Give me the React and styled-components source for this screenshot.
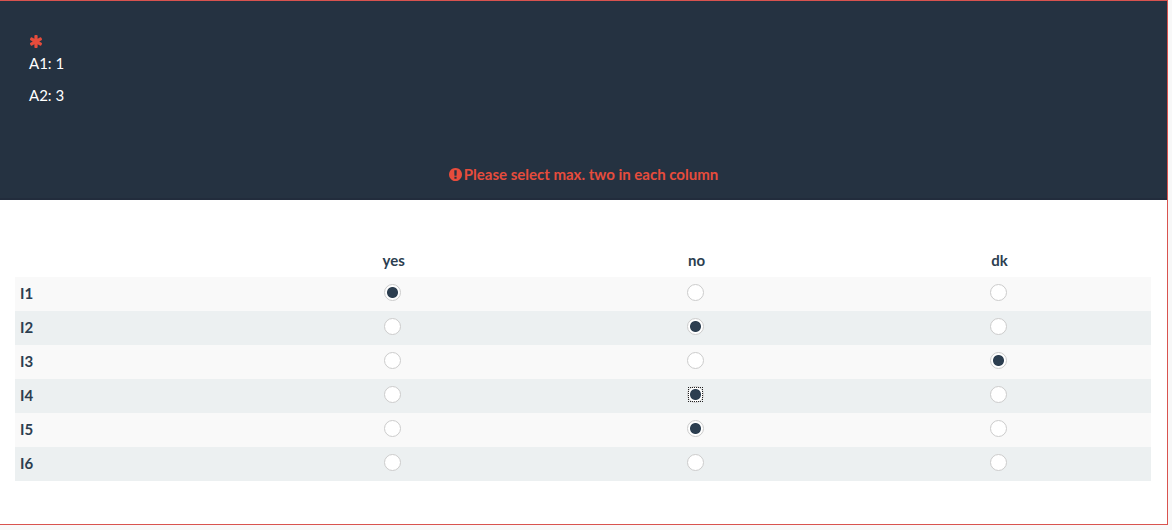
import React, {useState} from 'react';
import styled, {createGlobalStyle} from 'styled-components';

const GlobalStyle = createGlobalStyle`
    *, *::before, *::after {
        box-sizing: border-box;
    }

    body {
        margin: 0;
        background: #f8f8f8;
        color: #2c3e50;
        font-family: Lato, 'Liberation Sans', sans-serif;
        font-size: 15px;
        line-height: 22px;
    }
`;

const Question = styled.section`
    margin-right: 4px;
    padding-bottom: 43px;
    background: #ffffff;
    border: 1px solid #d9534f;
    border-left: 0;
`;

const QuestionHeader = styled.header`
    padding: 29px 29px 13px;
    background: #253241;
    border-bottom: 2px solid #222c3c;
    color: #ffffff;
`;

const Required = styled.div`
    display: flex;
    align-items: center;
    height: 22px;
    color: #e74c3c;
`;

const QuestionText = styled.p`
    margin: 0 0 10px;
`;

const ErrorMessage = styled.div`
    display: flex;
    align-items: center;
    justify-content: center;
    gap: 2px;
    margin-top: 57px;
    color: #e74c3c;
    font-weight: bold;
`;

const AnswerArea = styled.div`
    padding: 44px 16px 0 15px;
`;

const AnswerTable = styled.table`
    width: 100%;
    table-layout: fixed;
    border-collapse: collapse;
`;

const ColumnHeader = styled.th`
    width: ${props => props.$width};
    height: 33px;
    padding: 0 0 2px;
    text-align: center;
`;

const AnswerRow = styled.tr`
    height: 34px;
    background: #f9f9f9;

    &:nth-child(even) {
        background: #ecf0f1;
    }
`;

const RowHeader = styled.th`
    padding: 0 5px 2px;
    text-align: left;
`;

const AnswerCell = styled.td`
    padding: 0 3px 4px 0;
`;

const Radio = styled.input`
    appearance: none;
    display: block;
    width: 17px;
    height: 17px;
    margin: 0 auto;
    border: 1px solid #cccccc;
    border-radius: 50%;
    background: #ffffff;

    &:checked {
        background: radial-gradient(circle, #2c3e50 5px, #ffffff 6px);
    }

    &:focus {
        outline: none;
    }

    &:focus::before {
        content: '';
        display: block;
        height: 15px;
        border: 1px dotted #222222;
    }
`;

const AsteriskIcon = () => (
    <svg width="14" height="13" viewBox="0 128 1664 1536" fill="currentColor" role="img" aria-label="Mandatory">
        <path d="M1482 1050q46 26 59.5 77.5t-12.5 97.5l-64 110q-26 46-77.5 59.5t-97.5-12.5l-266-153v307q0 52-38 90t-90 38h-128q-52 0-90-38t-38-90v-307l-266 153q-46 26-97.5 12.5t-77.5-59.5l-64-110q-26-46-12.5-97.5t59.5-77.5l266-154-266-154q-46-26-59.5-77.5t12.5-97.5l64-110q26-46 77.5-59.5t97.5 12.5l266 153v-307q0-52 38-90t90-38h128q52 0 90 38t38 90v307l266-153q46-26 97.5-12.5t77.5 59.5l64 110q26 46 12.5 97.5t-59.5 77.5l-266 154z" />
    </svg>
);

const ExclamationIcon = () => (
    <svg width="13" height="13" viewBox="128 128 1536 1536" fill="currentColor" aria-hidden="true">
        <path d="M896 128q209 0 385.5 103t279.5 279.5 103 385.5-103 385.5-279.5 279.5-385.5 103-385.5-103-279.5-279.5-103-385.5 103-385.5 279.5-279.5 385.5-103zm128 1247v-190q0-14-9-23.5t-22-9.5h-192q-13 0-23 10t-10 23v190q0 13 10 23t23 10h192q13 0 22-9.5t9-23.5zm-2-344l18-621q0-12-10-18-10-8-24-8h-220q-14 0-24 8-10 6-10 18l17 621q0 10 10 17.5t24 7.5h185q14 0 23.5-7.5t10.5-17.5z" />
    </svg>
);

const columns = ['yes', 'no', 'dk'];
const rows = ['I1', 'I2', 'I3', 'I4', 'I5', 'I6'];

const App = () => {
    const [answers, setAnswers] = useState({I1: 'yes', I2: 'no', I3: 'dk', I4: 'no', I5: 'no'});

    return (
        <>
            <GlobalStyle />
            <Question>
                <QuestionHeader>
                    <Required><AsteriskIcon /></Required>
                    <QuestionText>A1: 1</QuestionText>
                    <QuestionText>A2: 3</QuestionText>
                    <ErrorMessage role="alert">
                        <ExclamationIcon />
                        <span>Please select max. two in each column</span>
                    </ErrorMessage>
                </QuestionHeader>
                <AnswerArea>
                    <AnswerTable>
                        <thead>
                            <tr>
                                <ColumnHeader as="td" $width="20%" />
                                {columns.map(column => (
                                    <ColumnHeader key={column} scope="col">{column}</ColumnHeader>
                                ))}
                            </tr>
                        </thead>
                        <tbody>
                            {rows.map(row => (
                                <AnswerRow key={row}>
                                    <RowHeader scope="row">{row}</RowHeader>
                                    {columns.map(column => (
                                        <AnswerCell key={column}>
                                            <Radio
                                                type="radio"
                                                name={row}
                                                value={column}
                                                aria-label={`${row} ${column}`}
                                                checked={answers[row] === column}
                                                autoFocus={row === 'I4' && column === 'no'}
                                                onChange={() => setAnswers({...answers, [row]: column})}
                                            />
                                        </AnswerCell>
                                    ))}
                                </AnswerRow>
                            ))}
                        </tbody>
                    </AnswerTable>
                </AnswerArea>
            </Question>
        </>
    );
}

export default App;
